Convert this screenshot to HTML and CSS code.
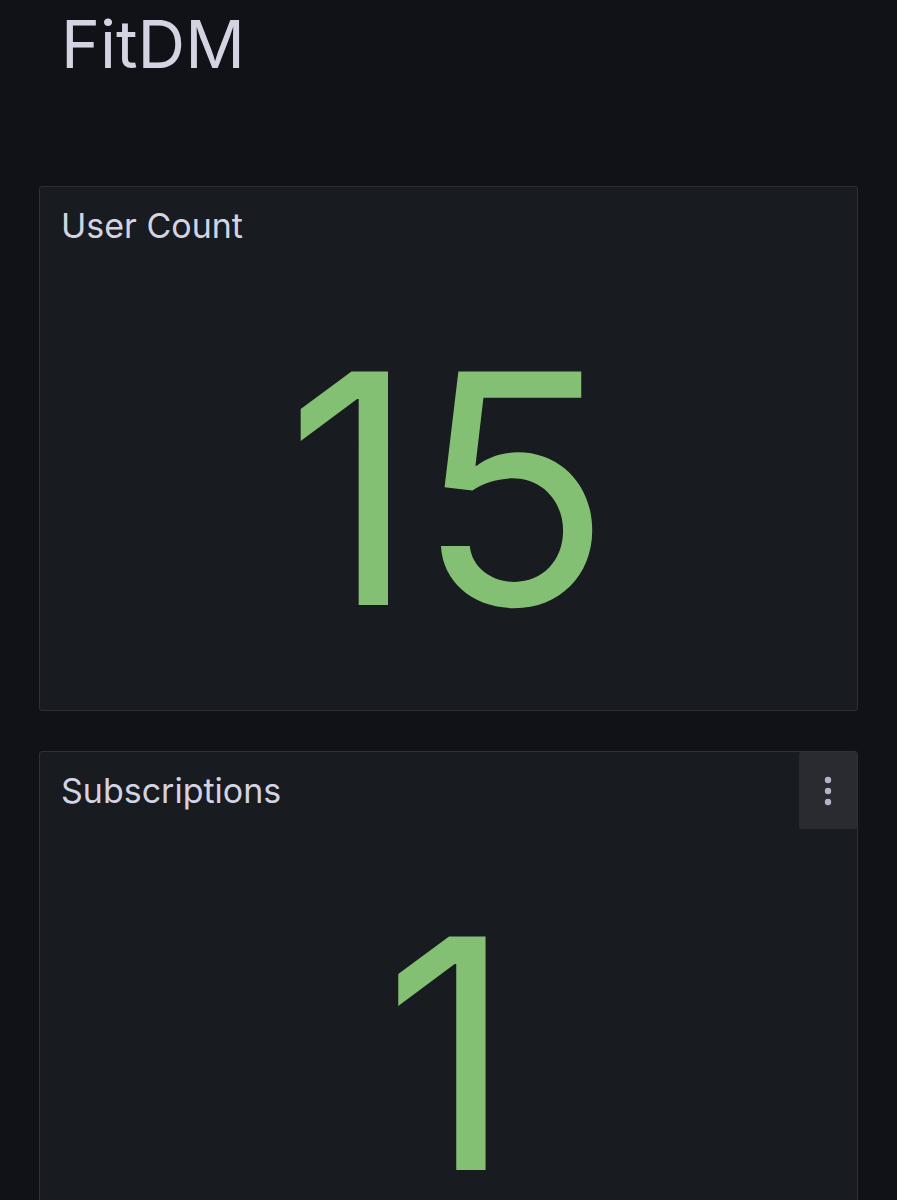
FILE: index.html
```html
<!DOCTYPE html>
<html>
<head>
<meta charset="utf-8">
<link rel="stylesheet" href="styles.css">
</head>
<body>
<header class="page-header">
  <h1 class="page-title">FitDM</h1>
</header>
<main class="panels">
  <section class="panel">
    <div class="panel-header"><h2 class="panel-title">User Count</h2></div>
    <div class="panel-body"><span class="stat">15</span></div>
  </section>
  <section class="panel">
    <div class="panel-header"><h2 class="panel-title">Subscriptions</h2></div>
    <button class="panel-menu" aria-label="Menu">
      <svg width="10" height="32" viewBox="0 0 10 32"><circle cx="5" cy="5" r="3.2" fill="#b4b5c4"/><circle cx="5" cy="16" r="3.2" fill="#b4b5c4"/><circle cx="5" cy="27" r="3.2" fill="#b4b5c4"/></svg>
    </button>
    <div class="panel-body"><span class="stat">1</span></div>
  </section>
</main>
</body>
</html>
```
FILE: styles.css
```css
html, body {
  margin: 0;
  padding: 0;
  background: #111217;
  font-family: Inter, "Noto Sans", sans-serif;
  color: #d3d3e2;
  height: 1200px;
  overflow: hidden;
}
.page-header {
  padding: 11px 0 0 61px;
  height: 186px;
  box-sizing: border-box;
}
.page-title {
  margin: 0;
  font-size: 66px;
  font-weight: 400;
  line-height: 1;
}
.panels {
  display: flex;
  flex-direction: column;
  gap: 40px;
  padding: 0 39px;
}
.panel {
  position: relative;
  display: flex;
  flex-direction: column;
  height: 525px;
  box-sizing: border-box;
  background: #181b1f;
  border: 1px solid #2e3035;
  border-radius: 3px;
  flex-shrink: 0;
}
.panel-header {
  height: 80px;
  box-sizing: border-box;
  padding: 22px 21px 0 21px;
}
.panel-title {
  margin: 0;
  font-size: 34px;
  font-weight: 400;
  line-height: 1;
}
.panel-body {
  flex: 1;
  display: flex;
  align-items: center;
  justify-content: center;
}
.stat {
  font-size: 321px;
  line-height: 1;
  color: #84c073;
  font-weight: 400;
}
.panel-menu {
  position: absolute;
  top: 0;
  right: 0;
  width: 58px;
  height: 77px;
  border: none;
  border-radius: 3px;
  background: #2a2b30;
  display: flex;
  align-items: center;
  justify-content: center;
  padding: 0;
}
```
